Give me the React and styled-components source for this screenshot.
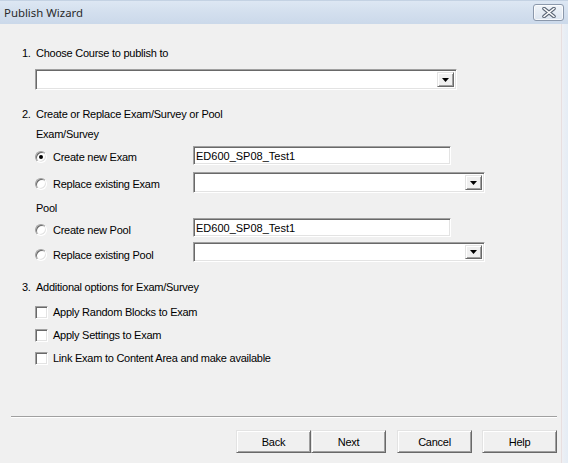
import React from 'react';
import styled, { createGlobalStyle } from 'styled-components';

const Global = createGlobalStyle`
  html, body { margin: 0; padding: 0; background: #f0f0f0; }
  body { font-family: "Liberation Sans", Arial, sans-serif; font-size: 11px; color: #000; }
  * { box-sizing: border-box; }
`;

const Window = styled.div`
  width: 568px;
  height: 463px;
  display: flex;
  flex-direction: column;
  background: #f0f0f0;
  overflow: hidden;
`;

const TitleBar = styled.div`
  flex: none;
  height: 24px;
  display: flex;
  align-items: center;
  justify-content: space-between;
  padding: 0 4px 0 4px;
  background: linear-gradient(#dde7f3 0%, #d3dfee 50%, #cbd9ea 100%);
  border-top: 1px solid #c4d2e3;
`;

const Title = styled.span`
  font-family: "Noto Sans", "Open Sans", sans-serif;
  font-size: 11.4px;
  color: #2a2a2a;
`;

const CloseBtn = styled.div`
  width: 31px;
  height: 17px;
  border: 1px solid #8b98ab;
  border-radius: 3px;
  background: linear-gradient(#f0f4f9, #dce5f0);
  display: flex;
  align-items: center;
  justify-content: center;
  box-shadow: inset 0 0 0 1px rgba(255, 255, 255, 0.7);
`;

const Frame = styled.div`
  flex: 1;
  display: flex;
`;

const Client = styled.div`
  width: 561px;
  display: flex;
  flex-direction: column;
  letter-spacing: -0.25px;
`;

const Edge = styled.div`
  flex: 1;
  border-left: 1px solid #e8dfe0;
  background: linear-gradient(90deg, #eef0f4, #e4ecf5);
`;

const Content = styled.div`
  padding: 21px 0 0 22px;
  display: flex;
  flex-direction: column;
`;

const Heading = styled.div`
  height: 16px;
  display: flex;
  align-items: center;
  margin-top: ${p => p.$mt || 0}px;
`;

const Num = styled.span`
  width: 14px;
  flex: none;
`;

const SubLabel = styled.div`
  height: 16px;
  display: flex;
  align-items: center;
  padding-left: 14px;
  margin-top: ${p => p.$mt || 0}px;
`;

const sunken = `
  background: #fff;
  border: 1px solid;
  border-color: #a0a0a0 #ffffff #ffffff #a0a0a0;
  box-shadow: inset 1px 1px 0 #696969, inset -1px -1px 0 #e3e3e3;
`;

const ComboBox = styled.div`
  ${sunken}
  width: ${p => p.$w}px;
  height: ${p => p.$h || 21}px;
  margin-left: ${p => p.$ml || 0}px;
  margin-top: ${p => p.$mt || 0}px;
  padding: 2px;
  display: flex;
  justify-content: flex-end;
`;

const DropButton = styled.div`
  width: 17px;
  height: 100%;
  background: #f0f0f0;
  border: 1px solid;
  border-color: #e3e3e3 #696969 #696969 #e3e3e3;
  box-shadow: inset 1px 1px 0 #ffffff, inset -1px -1px 0 #a0a0a0;
  display: flex;
  align-items: center;
  justify-content: center;
`;

const TextBox = styled.div`
  ${sunken}
  width: ${p => p.$w}px;
  height: 19px;
  padding: 1px 2px 0;
  display: flex;
  align-items: center;
  font-size: 11px;
  letter-spacing: 0;
`;

const OptionRow = styled.div`
  display: grid;
  grid-template-columns: 158px auto;
  align-items: center;
  margin-left: 13px;
  margin-top: ${p => p.$mt || 0}px;
`;

const OptionLabel = styled.label`
  display: flex;
  align-items: center;
  gap: 6px;
  padding-top: ${p => p.$dy || 2}px;
`;

const Radio = styled.span`
  width: 12px;
  height: 12px;
  flex: none;
  border-radius: 50%;
  background: #fff;
  border: 1px solid;
  border-color: #a0a0a0 #ffffff #ffffff #a0a0a0;
  box-shadow: inset 1px 1px 0 #696969, inset -1px -1px 0 #e3e3e3;
  display: flex;
  align-items: center;
  justify-content: center;
  &::after {
    content: "";
    width: 4px;
    height: 4px;
    border-radius: 50%;
    background: ${p => (p.$checked ? '#000' : 'transparent')};
  }
`;

const CheckRow = styled.label`
  display: flex;
  align-items: center;
  gap: 5px;
  height: 16px;
  margin-left: 13px;
  margin-top: ${p => p.$mt || 0}px;
`;

const Check = styled.span`
  width: 13px;
  height: 13px;
  flex: none;
  background: #fff;
  border: 1px solid;
  border-color: #a0a0a0 #ffffff #ffffff #a0a0a0;
  box-shadow: inset 1px 1px 0 #696969, inset -1px -1px 0 #e3e3e3;
`;

const Footer = styled.div`
  margin-top: auto;
  padding-bottom: 10px;
  display: flex;
  flex-direction: column;
`;

const Separator = styled.div`
  margin-left: 11px;
  width: 546px;
  height: 2px;
  border-top: 1px solid #a0a0a0;
  border-bottom: 1px solid #ffffff;
`;

const ButtonRow = styled.div`
  margin-top: 12px;
  display: flex;
  justify-content: flex-end;
  padding-right: 4px;
`;

const Button = styled.button`
  width: 75px;
  height: 23px;
  margin-left: ${p => p.$ml || 0}px;
  font-family: "Liberation Sans", Arial, sans-serif;
  font-size: 11px;
  letter-spacing: -0.25px;
  color: #000;
  padding: 0;
  background: #f0f0f0;
  border: 1px solid;
  border-color: #e3e3e3 #696969 #696969 #e3e3e3;
  box-shadow: inset 1px 1px 0 #ffffff, inset -1px -1px 0 #a0a0a0;
  border-radius: 0;
`;

const Arrow = () => (
  <svg width="7" height="4" viewBox="0 0 7 4">
    <polygon points="0,0 7,0 3.5,4" fill="#000" />
  </svg>
);

const CloseGlyph = () => (
  <svg width="14" height="11" viewBox="0 0 14 11">
    <path
      d="M2 1.5 L12 9.5 M12 1.5 L2 9.5"
      stroke="#5b6676"
      strokeWidth="3.6"
      strokeLinecap="round"
      fill="none"
    />
    <path
      d="M2 1.5 L12 9.5 M12 1.5 L2 9.5"
      stroke="#ffffff"
      strokeWidth="1.6"
      strokeLinecap="round"
      fill="none"
    />
  </svg>
);

const Combo = ({ w, h, ml, mt }) => (
  <ComboBox $w={w} $h={h} $ml={ml} $mt={mt}>
    <DropButton>
      <Arrow />
    </DropButton>
  </ComboBox>
);

export default function App() {
  return (
    <>
      <Global />
      <Window>
        <TitleBar>
          <Title>Publish Wizard</Title>
          <CloseBtn>
            <CloseGlyph />
          </CloseBtn>
        </TitleBar>
        <Frame>
          <Client>
            <Content>
              <Heading>
                <Num>1.</Num>Choose Course to publish to
              </Heading>
              <Combo w={422} ml={13} mt={8} />

              <Heading $mt={16}>
                <Num>2.</Num>Create or Replace Exam/Survey or Pool
              </Heading>
              <SubLabel $mt={4}>Exam/Survey</SubLabel>
              <OptionRow $mt={4}>
                <OptionLabel>
                  <Radio $checked />
                  Create new Exam
                </OptionLabel>
                <TextBox $w={258}>ED600_SP08_Test1</TextBox>
              </OptionRow>
              <OptionRow $mt={7}>
                <OptionLabel>
                  <Radio />
                  Replace existing Exam
                </OptionLabel>
                <Combo w={292} />
              </OptionRow>
              <SubLabel $mt={7}>Pool</SubLabel>
              <OptionRow $mt={2}>
                <OptionLabel $dy={5}>
                  <Radio />
                  Create new Pool
                </OptionLabel>
                <TextBox $w={258}>ED600_SP08_Test1</TextBox>
              </OptionRow>
              <OptionRow $mt={5}>
                <OptionLabel $dy={5}>
                  <Radio />
                  Replace existing Pool
                </OptionLabel>
                <Combo w={292} h={20} />
              </OptionRow>

              <Heading $mt={17}>
                <Num>3.</Num>Additional options for Exam/Survey
              </Heading>
              <CheckRow $mt={9}>
                <Check />
                Apply Random Blocks to Exam
              </CheckRow>
              <CheckRow $mt={7}>
                <Check />
                Apply Settings to Exam
              </CheckRow>
              <CheckRow $mt={7}>
                <Check />
                Link Exam to Content Area and make available
              </CheckRow>
            </Content>
            <Footer>
              <Separator />
              <ButtonRow>
                <Button>Back</Button>
                <Button>Next</Button>
                <Button $ml={11}>Cancel</Button>
                <Button $ml={10}>Help</Button>
              </ButtonRow>
            </Footer>
          </Client>
          <Edge />
        </Frame>
      </Window>
    </>
  );
}
